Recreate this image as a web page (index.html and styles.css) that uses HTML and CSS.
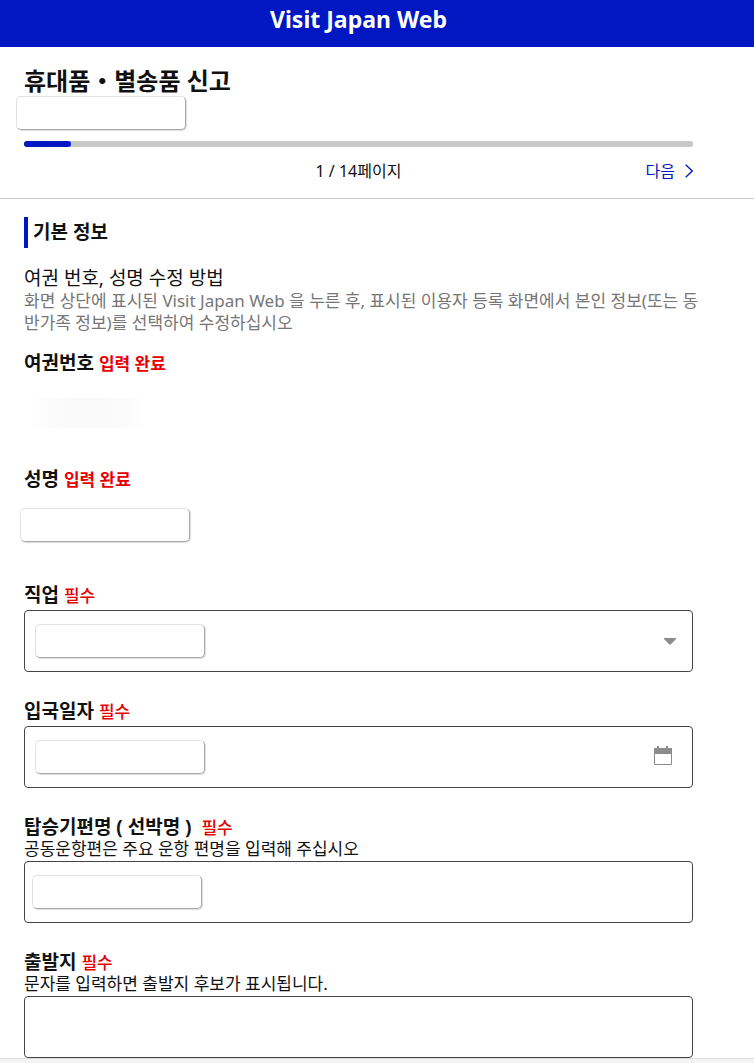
FILE: index.html
```html
<!DOCTYPE html>
<html lang="ko">
<head>
<meta charset="utf-8">
<meta name="viewport" content="width=device-width, initial-scale=1">
<title>Visit Japan Web</title>
<link rel="stylesheet" href="styles.css">
</head>
<body>
<header class="site-header">Visit Japan Web</header>
<section class="intro">
  <h1 class="page-title">휴대품・별송품 신고</h1>
  <div class="user-name"><span class="mask mask-name"></span></div>
  <div class="progress" role="progressbar" aria-label="진행률" aria-valuemin="0" aria-valuemax="14" aria-valuenow="1"><div class="progress-fill"></div></div>
  <nav class="pager">
    <span class="pager-count">1 / 14페이지</span>
    <a class="pager-next" href="#next">다음
      <svg class="chevron" viewBox="0 0 8 14" aria-hidden="true"><path d="M.7.7 7.2 7 .7 13.3" fill="none" stroke="currentColor" stroke-width="1.3"/></svg>
    </a>
  </nav>
</section>
<main class="content">
  <h2 class="section-title">기본 정보</h2>
  <h3 class="guide-title">여권 번호, 성명 수정 방법</h3>
  <p class="guide-text">화면 상단에 표시된 Visit Japan Web 을 누른 후, 표시된 이용자 등록 화면에서 본인 정보(또는 동반가족 정보)를 선택하여 수정하십시오</p>

  <div class="group">
    <div class="label">여권번호 <span class="tag">입력 완료</span></div>
    <div class="value"><span class="smudge"></span></div>
  </div>
  <div class="group">
    <div class="label">성명 <span class="tag">입력 완료</span></div>
    <div class="value"><span class="mask mask-value"></span></div>
  </div>
  <div class="group">
    <label class="label" for="job">직업 <span class="tag tag-required">필수</span></label>
    <div class="field">
      <select class="control" id="job"><option></option></select>
      <span class="mask mask-field"></span>
      <svg class="arrow" viewBox="0 0 12 7" aria-hidden="true"><path d="M0 0h12v1L6.700 6.600h-1.400L0 1z" fill="#8c8c8c"/></svg>
    </div>
  </div>
  <div class="group">
    <label class="label" for="date">입국일자 <span class="tag tag-required">필수</span></label>
    <div class="field">
      <input class="control" id="date" type="text">
      <span class="mask mask-field"></span>
      <button class="calendar" type="button" aria-label="날짜 선택">
        <svg class="calendar-icon" viewBox="0 0 18 19" aria-hidden="true"><path d="M0 2h18v6H0zM3 0h2v3H3zM12 0h2v3h-2z" fill="#8c8c8c"/><path d="M.5 7v11.500h17V7" fill="none" stroke="#8c8c8c"/></svg>
      </button>
    </div>
  </div>
  <div class="group">
    <label class="label" for="flight">탑승기편명 ( 선박명 )&nbsp; <span class="tag tag-required">필수</span></label>
    <p class="hint">공동운항편은 주요 운항 편명을 입력해 주십시오</p>
    <div class="field">
      <input class="control" id="flight" type="text">
      <span class="mask mask-flight"></span>
    </div>
  </div>
  <div class="group">
    <label class="label" for="origin">출발지 <span class="tag tag-required">필수</span></label>
    <p class="hint">문자를 입력하면 출발지 후보가 표시됩니다.</p>
    <div class="field"><input class="control" id="origin" type="text"></div>
  </div>
</main>
<footer class="bottom-bar"></footer>
</body>
</html>
```

FILE: styles.css
```css
* { box-sizing: border-box; }
body {
  margin: 0;
  background: #fff;
  color: #111;
  font-family: "Noto Sans", "Noto Sans CJK KR", sans-serif;
  font-size: 16px;
}
h1, h2, h3, p { margin: 0; }

.site-header {
  padding: 3px 61px 12px 24px;
  background: #0017c1;
  color: #fff;
  font-size: 23px;
  font-weight: 700;
  line-height: 32px;
  text-align: center;
}

.intro {
  padding: 18px 61px 11px 24px;
  border-bottom: 1px solid #ccc;
}
.page-title { font-size: 24px; font-weight: 700; line-height: 32px; }
.user-name { position: relative; height: 44px; }
.progress { height: 6px; border-radius: 3px; background: #c8c8c8; }
.progress-fill { width: 7%; height: 6px; border-radius: 3px; background: #0017c1; }
.pager {
  display: grid;
  grid-template-columns: 1fr auto 1fr;
  align-items: center;
  margin-top: 8px;
  line-height: 32px;
}
.pager-count { grid-column: 2; }
.pager-next {
  display: flex;
  align-items: center;
  justify-content: flex-end;
  gap: 10px;
  color: #0017c1;
  text-decoration: none;
}
.chevron { width: 8px; height: 14px; }

.content { padding: 18px 61px 0 24px; }
.section-title {
  padding-left: 5px;
  border-left: 4px solid #0017c1;
  font-size: 19px;
  font-weight: 700;
  line-height: 31px;
}
.guide-title { margin-top: 18px; font-size: 19px; font-weight: 400; line-height: 24px; }
.guide-text {
  margin-right: -10px;
  margin-bottom: 17px;
  color: #767676;
  font-size: 17px;
  line-height: 22px;
  word-break: break-all;
}

.group { margin-bottom: 27px; }
.label { display: block; font-size: 19px; font-weight: 700; line-height: 24px; }
.tag { color: #e60000; font-size: 17px; line-height: 1; }
.tag-required { font-weight: 500; }
.hint { font-size: 17px; line-height: 19px; }
.value { position: relative; height: 65px; }
.smudge {
  position: absolute;
  top: 23px;
  left: 0;
  width: 126px;
  height: 30px;
  background: linear-gradient(90deg, #fff, #f9f9f9 40%, #f9f9f9 65%, #fff);
}
.field { position: relative; margin-top: 3px; }
.control {
  display: block;
  width: 100%;
  height: 62px;
  padding: 0 48px 0 16px;
  border: 1px solid #444;
  border-radius: 4px;
  appearance: none;
  background: #fff;
  color: inherit;
  font: inherit;
}
.arrow { position: absolute; top: 28px; right: 17px; width: 12px; height: 7px; }
.calendar {
  position: absolute;
  top: 15px;
  right: 16px;
  display: grid;
  place-items: center;
  width: 28px;
  height: 28px;
  padding: 0;
  border: 0;
  background: none;
}
.calendar-icon { width: 18px; height: 19px; }

.mask {
  position: absolute;
  width: 170px;
  height: 34px;
  border: 1px solid #e2e2e2;
  border-right-color: #aaa;
  border-bottom-color: #aaa;
  border-radius: 5px;
  background: #fff;
  box-shadow: 1px 1px 1px #ddd;
}
.mask-name { top: -1px; left: -8px; }
.mask-value { top: 17px; left: -4px; }
.mask-field { top: 14px; left: 11px; }
.mask-flight { top: 14px; left: 8px; }

.bottom-bar { height: 5px; margin-top: -27px; border-top: 1px solid #ddd; background: #f4f4f4; }
```
